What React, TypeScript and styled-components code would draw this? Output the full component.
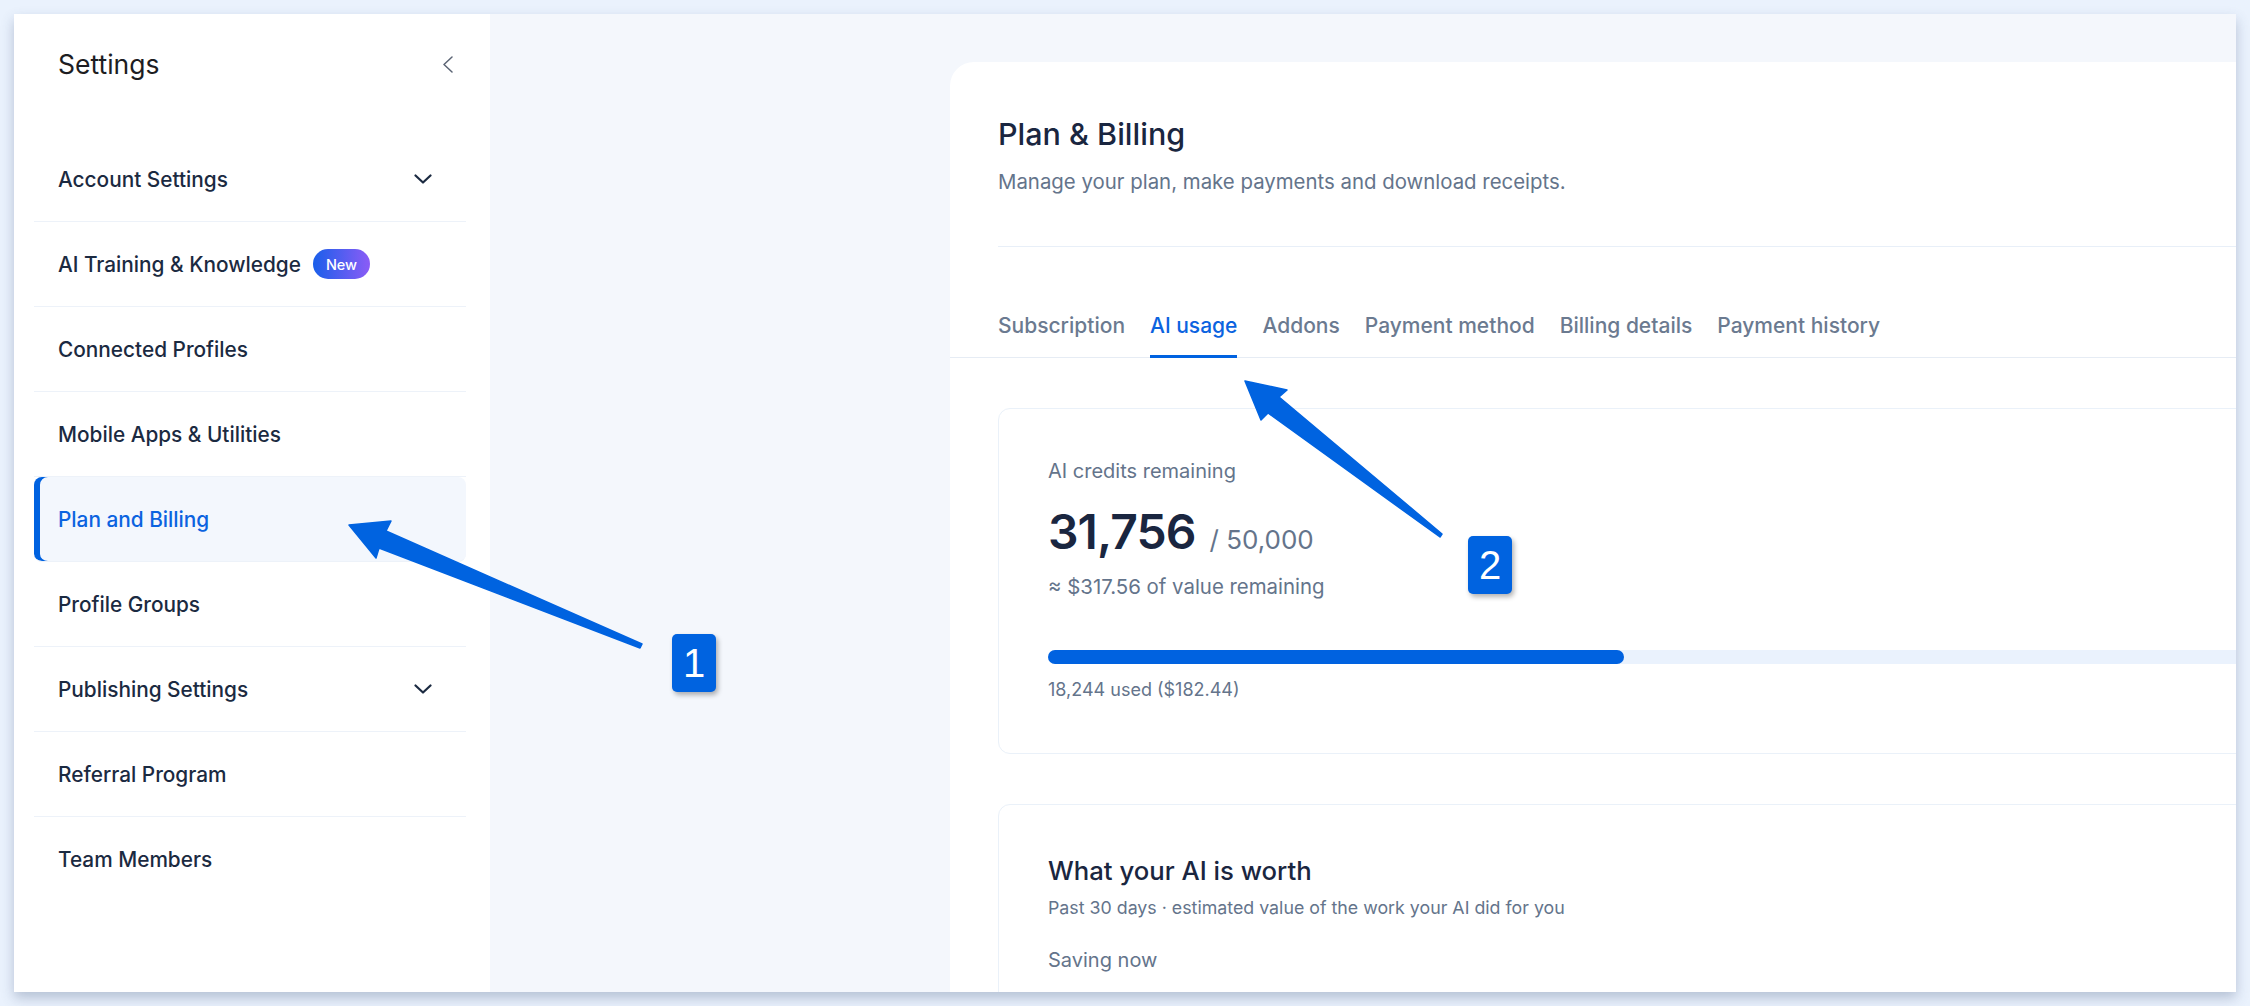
import styled, { createGlobalStyle } from "styled-components";

const GlobalStyle = createGlobalStyle`
  * {
    box-sizing: border-box;
  }
  html,
  body {
    margin: 0;
    padding: 0;
  }
  body {
    background: #eaf2fd;
    font-family: Inter, "Noto Sans", sans-serif;
    -webkit-font-smoothing: antialiased;
  }
`;

const Page = styled.div`
  position: relative;
  width: 2250px;
  height: 1006px;
  padding: 14px;
  overflow: hidden;
`;

const Window = styled.div`
  display: flex;
  height: 100%;
  background: #f4f7fc;
  box-shadow: 0 6px 12px rgba(60, 80, 120, 0.3);
  overflow: hidden;
`;

// left settings navigation
const Sidebar = styled.aside`
  width: 476px;
  flex-shrink: 0;
  background: #fff;
  padding: 32px 24px 0 20px;
`;

const SidebarHeader = styled.div`
  display: flex;
  align-items: center;
  justify-content: space-between;
  height: 36px;
  padding: 0 13px 0 24px;
`;

const SidebarTitle = styled.h2`
  margin: 0;
  font-size: 26.5px;
  font-weight: 400;
  color: #1d1d22;
`;

const IconButton = styled.button`
  display: flex;
  border: 0;
  padding: 0;
  background: none;
  color: #5b6474;
`;

const Menu = styled.nav`
  display: flex;
  flex-direction: column;
  margin-top: 55px;
`;

const MenuItem = styled.a<{ $active?: boolean }>`
  display: flex;
  align-items: center;
  justify-content: space-between;
  height: 85px;
  padding: 0 34px 0 24px;
  border-bottom: 1px solid #edf2f9;
  font-size: 20.8px;
  font-weight: 500;
  color: ${(props) => (props.$active ? "#0b63e0" : "#1b2a41")};
  background: ${(props) => (props.$active ? "#f3f7fd" : "transparent")};
  box-shadow: ${(props) => (props.$active ? "inset 6px 0 0 #0062e0" : "none")};
  border-radius: ${(props) => (props.$active ? "8px" : "0")};
  text-decoration: none;

  &:last-child {
    border-bottom: 0;
  }
`;

const MenuLabel = styled.span`
  display: flex;
  align-items: center;
  gap: 12px;
`;

const NewBadge = styled.span`
  display: inline-flex;
  align-items: center;
  height: 30px;
  padding: 0 13px;
  border-radius: 15px;
  background: linear-gradient(90deg, #1a5fea, #8b5cf6);
  color: #fff;
  font-size: 14.5px;
  font-weight: 500;
`;

// right side
const Main = styled.main`
  flex: 1;
  min-width: 0;
  overflow: hidden;
  padding: 48px 0 0 460px;
`;

const Card = styled.section`
  width: 1774px;
  min-height: 100%;
  background: #fff;
  border-top-left-radius: 24px;
`;

const CardHeader = styled.header`
  margin: 0 48px;
  padding: 54px 0 50px;
  border-bottom: 1px solid #e8eff8;
`;

const PageTitle = styled.h1`
  margin: 0;
  font-size: 30.5px;
  line-height: 36px;
  font-weight: 500;
  color: #1a2640;
`;

const PageSubtitle = styled.p`
  margin: 16px 0 0;
  font-size: 20.4px;
  line-height: 28px;
  color: #64748b;
`;

const Tabs = styled.div`
  display: flex;
  gap: 25px;
  padding: 67px 48px 0;
  border-bottom: 1px solid #e6ecf4;
`;

const Tab = styled.button<{ $active?: boolean }>`
  margin-bottom: -1px;
  padding: 0 0 17px;
  border: 0;
  border-bottom: 3px solid ${(props) => (props.$active ? "#0062e0" : "transparent")};
  background: none;
  font-family: inherit;
  font-size: 21px;
  line-height: 24px;
  font-weight: 500;
  color: ${(props) => (props.$active ? "#0b63e0" : "#6b7a90")};
`;

const Body = styled.div`
  display: flex;
  flex-direction: column;
  gap: 50px;
  padding: 50px 48px;
`;

const Panel = styled.div`
  border: 1px solid #eaf1f9;
  border-radius: 12px;
  padding: 50px 49px 52px;
`;

const Muted = styled.div<{ $size: number; $gap?: number }>`
  margin-top: ${(props) => props.$gap ?? 0}px;
  font-size: ${(props) => props.$size}px;
  line-height: ${(props) => Math.round(props.$size * 1.25)}px;
  color: #64748b;
`;

const CreditsRow = styled.div`
  display: flex;
  align-items: baseline;
  gap: 14px;
  margin-top: 21px;
`;

const CreditsValue = styled.span`
  font-size: 48px;
  line-height: 53px;
  font-weight: 600;
  letter-spacing: -0.02em;
  color: #1a2640;
`;

const CreditsTotal = styled.span`
  font-size: 26px;
  color: #64748b;
`;

const Track = styled.div`
  height: 14px;
  margin-top: 50px;
  border-radius: 7px;
  background: #eaf2fd;
`;

const Fill = styled.div`
  height: 100%;
  border-radius: 7px;
  background: #0062e0;
`;

const PanelTitle = styled.h3`
  margin: 0;
  font-size: 25.7px;
  line-height: 32px;
  font-weight: 500;
  color: #1a2640;
`;

// annotation layer
const Overlay = styled.svg`
  position: absolute;
  inset: 0;
  pointer-events: none;
`;

const Marker = styled.div<{ $x: number; $y: number }>`
  position: absolute;
  left: ${(props) => props.$x}px;
  top: ${(props) => props.$y}px;
  display: flex;
  align-items: center;
  justify-content: center;
  width: 44px;
  height: 58px;
  border-radius: 5px;
  background: #0063e0;
  box-shadow: 2px 3px 5px rgba(0, 0, 0, 0.3);
  color: #fff;
  font-family: "Liberation Sans", Arial, sans-serif;
  font-size: 40px;
`;

const menu = [
  { label: "Account Settings", expandable: true },
  { label: "AI Training & Knowledge", isNew: true },
  { label: "Connected Profiles" },
  { label: "Mobile Apps & Utilities" },
  { label: "Plan and Billing", active: true },
  { label: "Profile Groups" },
  { label: "Publishing Settings", expandable: true },
  { label: "Referral Program" },
  { label: "Team Members" },
];

const tabs = [
  "Subscription",
  "AI usage",
  "Addons",
  "Payment method",
  "Billing details",
  "Payment history",
];

const credits = { total: 50000, used: 18244 };

function ChevronDown() {
  return (
    <svg width="18" height="10" viewBox="0 0 18 10" fill="none">
      <polyline
        points="1.5,1.5 9,8.5 16.5,1.5"
        stroke="#1b2a41"
        strokeWidth="2.2"
        strokeLinecap="round"
        strokeLinejoin="round"
      />
    </svg>
  );
}

function ChevronLeft() {
  return (
    <svg width="11" height="17" viewBox="0 0 11 17" fill="none">
      <polyline
        points="10,1 2,8.5 10,16"
        stroke="currentColor"
        strokeWidth="1.5"
        strokeLinecap="round"
        strokeLinejoin="round"
      />
    </svg>
  );
}

export default function App() {
  const remaining = credits.total - credits.used;
  const usedPct = (credits.used / credits.total) * 100;

  return (
    <>
      <GlobalStyle />
      <Page>
        <Window>
          <Sidebar>
            <SidebarHeader>
              <SidebarTitle>Settings</SidebarTitle>
              <IconButton>
                <ChevronLeft />
              </IconButton>
            </SidebarHeader>
            <Menu>
              {menu.map((item) => (
                <MenuItem key={item.label} $active={item.active}>
                  <MenuLabel>
                    {item.label}
                    {item.isNew && <NewBadge>New</NewBadge>}
                  </MenuLabel>
                  {item.expandable && <ChevronDown />}
                </MenuItem>
              ))}
            </Menu>
          </Sidebar>

          <Main>
            <Card>
              <CardHeader>
                <PageTitle>Plan &amp; Billing</PageTitle>
                <PageSubtitle>
                  Manage your plan, make payments and download receipts.
                </PageSubtitle>
              </CardHeader>
              <Tabs>
                {tabs.map((t) => (
                  <Tab key={t} $active={t === "AI usage"}>
                    {t}
                  </Tab>
                ))}
              </Tabs>
              <Body>
                <Panel>
                  <Muted $size={20}>AI credits remaining</Muted>
                  <CreditsRow>
                    <CreditsValue>{remaining.toLocaleString("en-US")}</CreditsValue>
                    <CreditsTotal>/ {credits.total.toLocaleString("en-US")}</CreditsTotal>
                  </CreditsRow>
                  <Muted $size={20.4} $gap={16}>
                    ≈ ${(remaining / 100).toFixed(2)} of value remaining
                  </Muted>
                  <Track>
                    <Fill style={{ width: `${usedPct}%` }} />
                  </Track>
                  <Muted $size={18} $gap={14}>
                    {credits.used.toLocaleString("en-US")} used ($
                    {(credits.used / 100).toFixed(2)})
                  </Muted>
                </Panel>
                <Panel>
                  <PanelTitle>What your AI is worth</PanelTitle>
                  <Muted $size={17.8} $gap={10}>
                    Past 30 days · estimated value of the work your AI did for you
                  </Muted>
                  <Muted $size={20} $gap={29}>
                    Saving now
                  </Muted>
                </Panel>
              </Body>
            </Card>
          </Main>
        </Window>

        <Overlay width="2250" height="1006" viewBox="0 0 2250 1006">
          <polygon
            points="349,525 391,521 386,531 642,644 640,648 379,548 376,558"
            fill="#0063e0"
            stroke="#0063e0"
            strokeWidth="1.5"
            strokeLinejoin="round"
          />
          <polygon
            points="1245,381 1287,390 1279,397 1442,534 1440,537 1268,413 1261,420"
            fill="#0063e0"
            stroke="#0063e0"
            strokeWidth="1.5"
            strokeLinejoin="round"
          />
        </Overlay>
        <Marker $x={672} $y={634}>1</Marker>
        <Marker $x={1468} $y={536}>2</Marker>
      </Page>
    </>
  );
}
